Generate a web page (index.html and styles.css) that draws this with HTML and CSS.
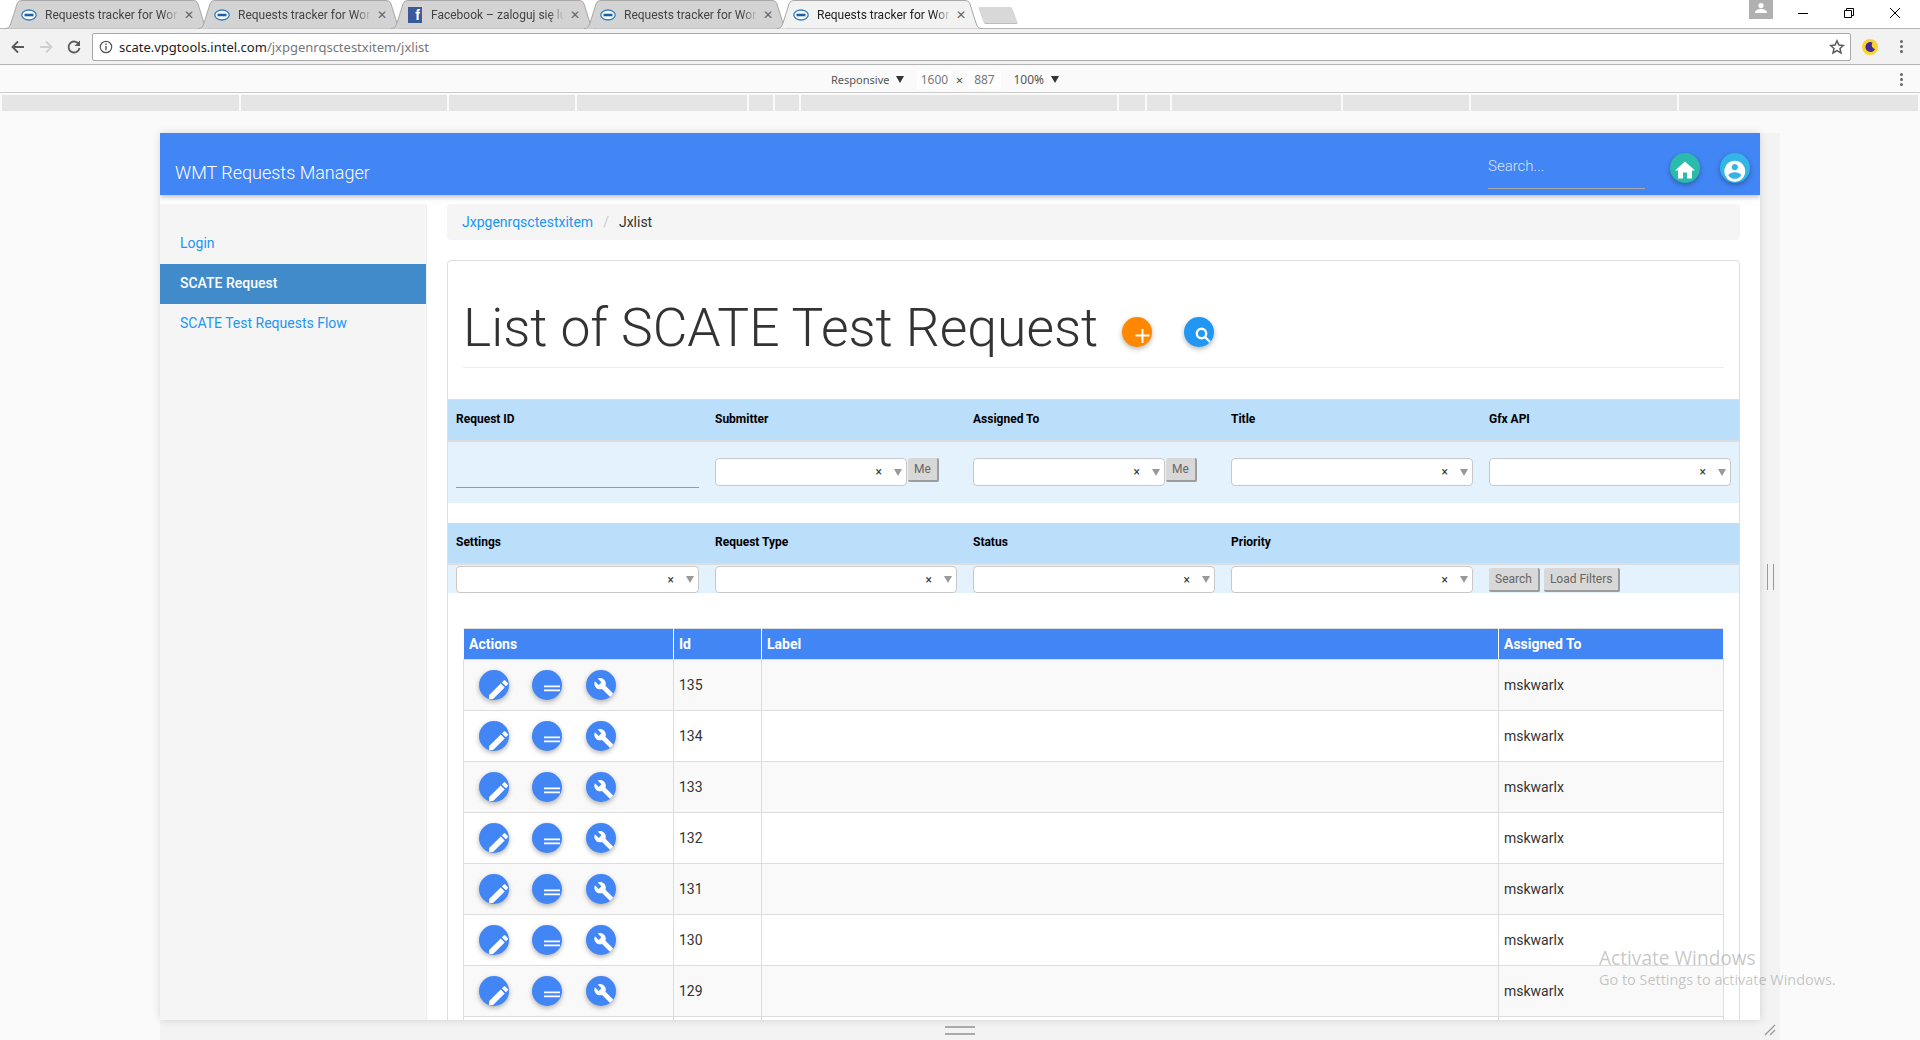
FILE: index.html
```html
<!doctype html>
<html>
<head>
<title>Requests tracker for Work</title>
<link rel="stylesheet" href="styles.css">
</head>
<body>
<svg class="defs" width="0" height="0">
	<symbol id="tabshape" viewBox="0 0 205 29"><path d="M0 28.5C4 28.5 5 26 6 23L12 4C13 1 15 .5 18 .5H187C190 .5 192 1 193 4L199 23C200 26 201 28.5 205 28.5"/></symbol>
	<symbol id="intel" viewBox="0 0 16 16"><ellipse cx="8" cy="8" rx="7.200" ry="5" fill="#fff" stroke="#2f7fc1" stroke-width="1.300"/><rect x="3.500" y="6.700" width="9" height="2.600" fill="#1f5fa8"/></symbol>
	<symbol id="i-edit" viewBox="0 0 30 30"><path transform="translate(7 7) scale(1.05)" d="M3 17.250V21h3.750L17.810 9.940l-3.750-3.750L3 17.250zM20.710 7.040c.39-.39.39-1.020 0-1.410l-2.340-2.340c-.39-.39-1.020-.39-1.410 0l-1.830 1.830 3.750 3.750 1.830-1.830z"/></symbol>
	<symbol id="i-list" viewBox="0 0 30 30"><path d="M12 15.500h16v1.700H12zM12 19.500h16v1.700H12z"/></symbol>
	<symbol id="i-tool" viewBox="0 0 30 30"><path transform="translate(7.500 7) scale(.88)" d="M22.700 19l-9.100-9.100c.9-2.300.4-5-1.500-6.900-2-2-5-2.400-7.400-1.300L9 6 6 9 1.600 4.700C.4 7.100.9 10.100 2.900 12.100c1.900 1.900 4.600 2.400 6.900 1.500l9.100 9.100c.4.4 1 .4 1.400 0l2.300-2.300c.5-.4.5-1.100.1-1.400z"/></symbol>
</svg>

<div class="tabstrip">
	<div class="tab">
		<svg class="tab-shape"><use href="#tabshape"/></svg>
		<svg class="favicon"><use href="#intel"/></svg>
		<span class="tab-title">Requests tracker for Wor</span><span class="tab-close">&#x2715;</span>
	</div>
	<div class="tab">
		<svg class="tab-shape"><use href="#tabshape"/></svg>
		<svg class="favicon"><use href="#intel"/></svg>
		<span class="tab-title">Requests tracker for Wor</span><span class="tab-close">&#x2715;</span>
	</div>
	<div class="tab">
		<svg class="tab-shape"><use href="#tabshape"/></svg>
		<span class="favicon fb">f</span>
		<span class="tab-title">Facebook – zaloguj się lu</span><span class="tab-close">&#x2715;</span>
	</div>
	<div class="tab">
		<svg class="tab-shape"><use href="#tabshape"/></svg>
		<svg class="favicon"><use href="#intel"/></svg>
		<span class="tab-title">Requests tracker for Wor</span><span class="tab-close">&#x2715;</span>
	</div>
	<div class="tab active">
		<svg class="tab-shape"><use href="#tabshape"/></svg>
		<svg class="favicon"><use href="#intel"/></svg>
		<span class="tab-title">Requests tracker for Wor</span><span class="tab-close">&#x2715;</span>
	</div>
	<div class="newtab"></div>
	<div class="winctl">
		<div class="profile"><svg width="12" height="12" viewBox="0 0 12 12"><circle cx="6" cy="3.600" r="2.600"/><path d="M0 11c0-3 3-4 6-4s6 1 6 4z"/></svg></div>
		<svg class="winbtn" viewBox="0 0 46 26"><path d="M18 13.500h10" stroke="#000" stroke-width="1"/></svg>
		<svg class="winbtn" viewBox="0 0 46 26"><path d="M18.500 10.500h7v7h-7zM20.500 10.500v-2h7v7h-2" fill="none" stroke="#000"/></svg>
		<svg class="winbtn" viewBox="0 0 46 26"><path d="M18 8l10 10M28 8L18 18" stroke="#000"/></svg>
	</div>
</div>

<div class="toolbar">
	<svg class="navicon" viewBox="0 0 16 16"><path d="M14 8H3M8 2.500L2.500 8 8 13.500" fill="none" stroke="#5a5a5a" stroke-width="1.800"/></svg>
	<svg class="navicon" viewBox="0 0 16 16"><path d="M2 8h11M8 2.500L13.500 8 8 13.500" fill="none" stroke="#cfcfcf" stroke-width="1.800"/></svg>
	<svg class="navicon" viewBox="0 0 16 16"><path d="M13 5.500A5.500 5.500 0 1 0 13.500 9" fill="none" stroke="#5a5a5a" stroke-width="1.800"/><path d="M14 1.500v5.500H8.500z" fill="#5a5a5a"/></svg>
	<div class="omnibox">
		<svg class="info" viewBox="0 0 14 14"><circle cx="7" cy="7" r="5.700" fill="none" stroke="#555" stroke-width="1.200"/><path d="M6.300 6h1.400v4.300H6.300zM6.300 3.500h1.400v1.400H6.300z" fill="#555"/></svg>
		<span class="url">scate.vpgtools.intel.com<span class="url-path">/jxpgenrqsctestxitem/jxlist</span></span>
		<svg class="star" viewBox="0 0 16 16"><path d="M8 1.800l1.900 4.200 4.500.5-3.400 3 1 4.500L8 11.700 4 14l1-4.500-3.400-3 4.500-.5z" fill="none" stroke="#5a5a5a" stroke-width="1.500"/></svg>
	</div>
	<div class="ext"><svg viewBox="0 0 16 16" width="16" height="16"><circle cx="8" cy="8" r="8" fill="#fbd32f"/><path d="M10.500 3.500A5 5 0 1 0 13 10 4.200 4.200 0 0 1 10.500 3.500z" fill="#3f2d96"/></svg></div>
	<div class="dots"><i></i><i></i><i></i></div>
</div>

<div class="devbar">
	<span>Responsive</span><span class="tri"></span>
	<span class="dim first">1600</span><span class="times">×</span><span class="dim">887</span>
	<span class="zoomval">100%</span><span class="tri"></span>
	<div class="dots"><i></i><i></i><i></i></div>
</div>

<div class="mediabar">
	<i></i><i></i><i></i><i></i><i></i><i></i><i></i><i></i><i></i><i></i><i></i><i></i><i></i>
</div>

<div class="device">
	<div class="viewport">
		<header class="topbar">
			<span class="brand">WMT Requests Manager</span>
			<input class="topsearch" placeholder="Search...">
			<a class="fab home"><svg viewBox="0 0 30 30"><path transform="translate(3 5.500)" d="M10 20v-6h4v6h5v-8h3L12 3 2 12h3v8z"/></svg></a>
			<a class="fab user"><svg viewBox="0 0 30 30"><path transform="translate(2.200 5.700) scale(1.050)" d="M12 2C6.480 2 2 6.480 2 12s4.480 10 10 10 10-4.480 10-10S17.520 2 12 2zm0 3c1.660 0 3 1.340 3 3s-1.340 3-3 3-3-1.340-3-3 1.340-3 3-3zm0 14.200c-2.500 0-4.710-1.280-6-3.220.030-1.990 4-3.080 6-3.080 1.990 0 5.970 1.090 6 3.080-1.290 1.940-3.500 3.220-6 3.220z"/></svg></a>
		</header>
		<div class="content">
			<nav class="sidebar">
				<a>Login</a>
				<a class="current">SCATE Request</a>
				<a>SCATE Test Requests Flow</a>
			</nav>
			<main class="main">
				<div class="breadcrumb"><a>Jxpgenrqsctestxitem</a><span class="sep">/</span><span>Jxlist</span></div>
				<section class="panel">
					<div class="page-header">
						<h1>List of SCATE Test Request</h1>
						<a class="fab add"><svg viewBox="0 0 30 30"><path d="M13.500 18.500h14M20.500 12v14" stroke="#fff" stroke-width="2" fill="none"/></svg></a>
						<a class="fab find"><svg viewBox="0 0 30 30"><circle cx="17.500" cy="16.500" r="4.700" fill="none" stroke="#fff" stroke-width="2.400"/><path d="M21 20l5.500 5.500" stroke="#fff" stroke-width="2.400"/></svg></a>
					</div>

					<div class="filter-grid filter-head">
						<label>Request ID</label><label>Submitter</label><label>Assigned To</label><label>Title</label><label>Gfx API</label>
					</div>
					<div class="filter-grid filter-row tall">
						<div class="cell"><input class="plain"></div>
						<div class="cell"><div class="pick short"><span class="clear">×</span><span class="tri grey"></span></div><button class="btn me">Me</button></div>
						<div class="cell"><div class="pick short"><span class="clear">×</span><span class="tri grey"></span></div><button class="btn me">Me</button></div>
						<div class="cell"><div class="pick"><span class="clear">×</span><span class="tri grey"></span></div></div>
						<div class="cell"><div class="pick"><span class="clear">×</span><span class="tri grey"></span></div></div>
					</div>
					<div class="filter-grid filter-head second">
						<label>Settings</label><label>Request Type</label><label>Status</label><label>Priority</label><label></label>
					</div>
					<div class="filter-grid filter-row">
						<div class="cell"><div class="pick"><span class="clear">×</span><span class="tri grey"></span></div></div>
						<div class="cell"><div class="pick"><span class="clear">×</span><span class="tri grey"></span></div></div>
						<div class="cell"><div class="pick"><span class="clear">×</span><span class="tri grey"></span></div></div>
						<div class="cell"><div class="pick"><span class="clear">×</span><span class="tri grey"></span></div></div>
						<div class="cell"><button class="btn">Search</button><button class="btn">Load Filters</button></div>
					</div>

					<table class="list">
						<thead><tr><th class="c-actions">Actions</th><th class="c-id">Id</th><th class="c-label">Label</th><th>Assigned To</th></tr></thead>
						<tbody>
							<tr><td><div class="actions"><a class="fab act"><svg><use href="#i-edit"/></svg></a><a class="fab act"><svg><use href="#i-list"/></svg></a><a class="fab act"><svg><use href="#i-tool"/></svg></a></div></td><td>135</td><td></td><td>mskwarlx</td></tr>
							<tr><td><div class="actions"><a class="fab act"><svg><use href="#i-edit"/></svg></a><a class="fab act"><svg><use href="#i-list"/></svg></a><a class="fab act"><svg><use href="#i-tool"/></svg></a></div></td><td>134</td><td></td><td>mskwarlx</td></tr>
							<tr><td><div class="actions"><a class="fab act"><svg><use href="#i-edit"/></svg></a><a class="fab act"><svg><use href="#i-list"/></svg></a><a class="fab act"><svg><use href="#i-tool"/></svg></a></div></td><td>133</td><td></td><td>mskwarlx</td></tr>
							<tr><td><div class="actions"><a class="fab act"><svg><use href="#i-edit"/></svg></a><a class="fab act"><svg><use href="#i-list"/></svg></a><a class="fab act"><svg><use href="#i-tool"/></svg></a></div></td><td>132</td><td></td><td>mskwarlx</td></tr>
							<tr><td><div class="actions"><a class="fab act"><svg><use href="#i-edit"/></svg></a><a class="fab act"><svg><use href="#i-list"/></svg></a><a class="fab act"><svg><use href="#i-tool"/></svg></a></div></td><td>131</td><td></td><td>mskwarlx</td></tr>
							<tr><td><div class="actions"><a class="fab act"><svg><use href="#i-edit"/></svg></a><a class="fab act"><svg><use href="#i-list"/></svg></a><a class="fab act"><svg><use href="#i-tool"/></svg></a></div></td><td>130</td><td></td><td>mskwarlx</td></tr>
							<tr><td><div class="actions"><a class="fab act"><svg><use href="#i-edit"/></svg></a><a class="fab act"><svg><use href="#i-list"/></svg></a><a class="fab act"><svg><use href="#i-tool"/></svg></a></div></td><td>129</td><td></td><td>mskwarlx</td></tr>
							<tr><td></td><td></td><td></td><td></td></tr>
						</tbody>
					</table>
				</section>
			</main>
		</div>
	</div>
	<div class="grip-right"></div>
	<div class="grip-bottom"></div>
	<div class="grip-corner"><svg width="12" height="12" viewBox="0 0 12 12"><path d="M1 11L11 1M6 11l5-5" stroke="#999" stroke-width="1.300"/></svg></div>
</div>

<div class="watermark">
	<div class="wm-big">Activate Windows</div>
	<div class="wm-small">Go to Settings to activate Windows.</div>
</div>
</body>
</html>
```

FILE: styles.css
```css
* {
  box-sizing: border-box;
}
html, body {
  margin: 0;
  height: 1040px;
  overflow: hidden;
}
body {
  position: relative;
  background: #fafafa;
  font-family: Roboto, "Liberation Sans", sans-serif;
  font-size: 14px;
  color: #333;
}
.defs {
  position: absolute;
}

/* browser chrome */
.tabstrip {
  display: flex;
  height: 28px;
  padding-left: 5px;
  background: #fff;
  position: relative;
  z-index: 2;
}
.tab {
  position: relative;
  display: flex;
  align-items: center;
  flex: none;
  width: 205px;
  height: 29px;
  margin-right: -12px;
  padding-left: 16px;
  font-size: 12px;
  color: #444;
}
.tab-shape {
  position: absolute;
  left: 0;
  top: 0;
  width: 205px;
  height: 29px;
  fill: #d3d3d3;
  stroke: #a8a8a8;
}
.tab.active {
  color: #222;
}
.tab.active .tab-shape {
  fill: #f2f2f2;
}
.favicon {
  position: relative;
  flex: none;
  width: 16px;
  height: 16px;
}
.fb {
  background: #3b5998;
  color: #fff;
  font: bold 14px/17px "Liberation Sans", sans-serif;
  text-align: right;
  padding-right: 2px;
  width: 14px;
  margin: 0 1px;
}
.tab-title {
  position: relative;
  flex: none;
  width: 134px;
  margin-left: 8px;
  white-space: nowrap;
  -webkit-mask-image: linear-gradient(to right, #000 88%, transparent);
  mask-image: linear-gradient(to right, #000 88%, transparent);
}
.tab-close {
  position: relative;
  width: 12px;
  margin-left: 4px;
  font-size: 12px;
  font-weight: 700;
  font-family: "DejaVu Sans", sans-serif;
  color: #666;
  text-align: center;
}
.newtab {
  flex: none;
  width: 34px;
  height: 17px;
  margin: 7px 0 0 11px;
  background: #d8d8d8;
  border-bottom: 1px solid #bbb;
  border-radius: 2px;
  transform: skewX(20deg);
}
.winctl {
  display: flex;
  align-items: flex-start;
  margin-left: auto;
  padding-right: 2px;
}
.profile {
  width: 24px;
  height: 19px;
  margin-right: 7px;
  background: #b0b0b0;
  display: flex;
  justify-content: center;
  padding-top: 2px;
  fill: #fff;
}
.winbtn {
  width: 46px;
  height: 26px;
}

.toolbar {
  display: flex;
  align-items: center;
  height: 37px;
  padding: 0 0 0 10px;
  background: #f2f2f2;
  border-top: 1px solid #b4b4b4;
  border-bottom: 1px solid #b4b4b4;
}
.navicon {
  width: 16px;
  height: 16px;
  margin-right: 12px;
}
.omnibox {
  display: flex;
  align-items: center;
  width: 1759px;
  height: 28px;
  margin-left: -2px;
  padding: 0 5px 0 6px;
  background: #fff;
  border: 1px solid #a9a9a9;
  border-radius: 2px;
}
.info {
  width: 14px;
  height: 14px;
}
.url {
  margin-left: 6px;
  font-family: "Noto Sans", sans-serif;
  font-size: 13px;
  color: #222;
}
.url-path {
  color: #777;
}
.star {
  width: 16px;
  height: 16px;
  margin-left: auto;
}
.ext {
  width: 16px;
  height: 16px;
  margin-left: 11px;
}
.dots {
  display: flex;
  flex-direction: column;
  gap: 2px;
  margin-left: auto;
  padding-right: 17px;
}
.dots i {
  display: block;
  width: 3px;
  height: 3px;
  border-radius: 50%;
  background: #666;
}

.devbar {
  display: flex;
  align-items: center;
  height: 28px;
  padding: 2px 0 0 831px;
  background: #fafafa;
  border-bottom: 1px solid #ccc;
  font-family: "Noto Sans", sans-serif;
  font-size: 11px;
  color: #555;
}
.tri {
  display: inline-block;
  width: 0;
  height: 0;
  margin-left: 7px;
  border-left: 4px solid transparent;
  border-right: 4px solid transparent;
  border-top: 7px solid #333;
}
.dim {
  width: 34px;
  height: 18px;
  background: #fff;
  line-height: 18px;
  text-align: center;
  font-size: 12px;
  color: #777;
}
.dim.first {
  margin-left: 13px;
}
.times {
  width: 16px;
  font-size: 13px;
  text-align: center;
}
.zoomval {
  margin-left: 12px;
  font-size: 12px;
}

.mediabar {
  display: grid;
  grid-template-columns: 237px 206px 126px 170px 24px 24px 316px 26px 23px 169px 126px 206px 1fr;
  gap: 2px;
  height: 16px;
  margin: 2px 2px 0 2px;
}
.mediabar i {
  background: #e5e5e5;
}

/* device frame */
.device {
  display: grid;
  grid-template-columns: 1600px 20px;
  grid-template-rows: 887px 20px;
  width: 1620px;
  margin: 22px 0 0 160px;
  background: #f3f3f3;
}
.viewport {
  display: flex;
  flex-direction: column;
  overflow: hidden;
  background: #fff;
  box-shadow: 0 0 8px rgba(0, 0, 0, .14);
}
.topbar {
  display: flex;
  align-items: center;
  flex: none;
  height: 62px;
  padding: 0 10px 0 15px;
  background: #4285f4;
  box-shadow: 0 2px 5px rgba(0, 0, 0, .26);
  position: relative;
}
.brand {
  margin-top: 16px;
  font-size: 18px;
  font-weight: 300;
  color: #fff;
}
.topsearch {
  width: 157px;
  height: 46px;
  margin: 4px 0 0 auto;
  padding: 0;
  background: transparent;
  border: 0;
  border-bottom: 1px solid #a9a9a9;
  outline: 0;
  font: 300 15px Roboto, sans-serif;
  color: #fff;
}
.topsearch::placeholder {
  color: rgba(255, 255, 255, .8);
}
.fab {
  display: block;
  flex: none;
  width: 30px;
  height: 30px;
  border-radius: 50%;
  overflow: hidden;
  box-shadow: 0 2px 5px rgba(0, 0, 0, .3);
}
.fab svg {
  display: block;
  width: 30px;
  height: 30px;
  fill: #fff;
}
.home {
  margin: 8px 0 0 25px;
  background: #2bbbad;
}
.user {
  margin: 8px 0 0 20px;
  background: #33b5e5;
}

.content {
  display: flex;
  flex: 1;
  min-height: 0;
  padding-top: 9px;
}
.sidebar {
  flex: none;
  width: 267px;
  padding-top: 20px;
  background: #f5f5f5;
  border-right: 1px solid #eee;
}
.sidebar a {
  display: block;
  height: 40px;
  padding-left: 20px;
  line-height: 38px;
  color: #2196f3;
}
.sidebar a.current {
  background: #428bca;
  color: #fff;
  font-weight: 500;
}
.main {
  flex: 1;
  min-width: 0;
  padding: 0 20px 0 20px;
}
.breadcrumb {
  display: flex;
  align-items: center;
  height: 36px;
  margin-bottom: 20px;
  padding: 0 0 1px 15px;
  background: #f5f5f5;
  border-radius: 4px;
}
.breadcrumb a {
  color: #2196f3;
}
.sep {
  margin: 0 10px;
  color: #ccc;
}
.panel {
  border: 1px solid #ddd;
  border-radius: 4px;
  height: 900px;
}
.page-header {
  display: flex;
  height: 107px;
  margin: 0 15px 31px;
  padding-top: 36px;
  border-bottom: 1px solid #eee;
}
.page-header h1 {
  margin: 0;
  font-size: 53.4px;
  font-weight: 300;
  line-height: 62px;
  white-space: nowrap;
}
.add {
  margin: 20px 0 0 24px;
  background: #ff8800;
}
.find {
  margin: 20px 0 0 32px;
  background: #2196f3;
}

.filter-grid {
  display: grid;
  grid-template-columns: 259px 258px 258px 258px 258px;
}
.filter-head {
  height: 43px;
  align-items: center;
  background: #bbdefb;
  border-top: 1px solid #ddd;
  border-bottom: 2px solid #ddd;
}
.filter-head.second {
  height: 42px;
  margin-top: 20px;
  border-top: 0;
}
.filter-head label {
  margin-bottom: 3px;
  padding-left: 8px;
  font-size: 12px;
  font-weight: 700;
  color: #000;
}
.filter-row {
  height: 28px;
  background: #e3f2fd;
}
.filter-row.tall {
  height: 61px;
  padding-top: 16px;
}
.cell {
  display: flex;
  align-items: flex-start;
  padding: 0 8px;
}
.filter-row:not(.tall) .cell {
  padding-top: 1px;
}
.plain {
  width: 100%;
  height: 30px;
  background: transparent;
  border: 0;
  border-bottom: 1px solid #999;
  outline: 0;
}
.pick {
  display: flex;
  align-items: center;
  justify-content: flex-end;
  flex: 1;
  height: 28px;
  padding-right: 4px;
  background: #fff;
  border: 1px solid #c8c8c8;
  border-radius: 4px;
}
.filter-row:not(.tall) .pick {
  height: 27px;
}
.pick.short {
  flex: none;
  width: 192px;
}
.clear {
  font-size: 12px;
  color: #333;
}
.tri.grey {
  margin-left: 12px;
  border-top-color: #999;
}
.btn {
  height: 24px;
  margin-left: 1px;
  padding: 0 6px;
  background: #d8d8d8;
  border: 0;
  border-right: 2px solid #9c9c9c;
  border-bottom: 2px solid #9c9c9c;
  border-radius: 2px;
  font: 12px Roboto, sans-serif;
  color: #666;
}
.btn.me {
  width: 31px;
  padding: 0;
}
.filter-row:not(.tall) .btn {
  margin: 2px 4px 0 0;
}

.list {
  width: 1261px;
  margin: 35px 15px 0;
  border-collapse: collapse;
  table-layout: fixed;
}
.list th {
  height: 31px;
  padding: 0 5px;
  background: #4285f4;
  border: 1px solid #ddd;
  border-left-color: #fff;
  border-right-color: #fff;
  color: #fff;
  text-align: left;
  font-weight: 700;
}
.list td {
  height: 51px;
  padding: 0 5px;
  border: 1px solid #ddd;
}
.list tbody tr:nth-child(odd) {
  background: #f9f9f9;
}
.c-actions {
  width: 210px;
}
.c-id {
  width: 88px;
}
.c-label {
  width: 737px;
}
.actions {
  display: flex;
  gap: 23px;
  padding-left: 10px;
}
.act:last-child {
  margin-left: 1px;
}
.act {
  background: #4285f4;
}

.grip-right {
  display: flex;
  justify-content: center;
  align-items: center;
}
.grip-right::after {
  content: "";
  width: 5px;
  height: 26px;
  border-left: 1px solid #999;
  border-right: 1px solid #999;
}
.grip-bottom {
  display: flex;
  justify-content: center;
  align-items: center;
}
.grip-bottom::after {
  content: "";
  width: 30px;
  height: 5px;
  border-top: 2px solid #aaa;
  border-bottom: 2px solid #aaa;
}
.grip-corner {
  display: flex;
  justify-content: center;
  align-items: center;
}

/* sits over the page */
.watermark {
  position: absolute;
  left: 1599px;
  top: 944px;
  font-family: "Open Sans", sans-serif;
  color: rgba(120, 120, 120, .42);
  pointer-events: none;
}
.wm-big {
  font-size: 19.1px;
  line-height: 28px;
}
.wm-small {
  font-size: 14.45px;
  line-height: 20px;
  margin-top: -2px;
}
```
